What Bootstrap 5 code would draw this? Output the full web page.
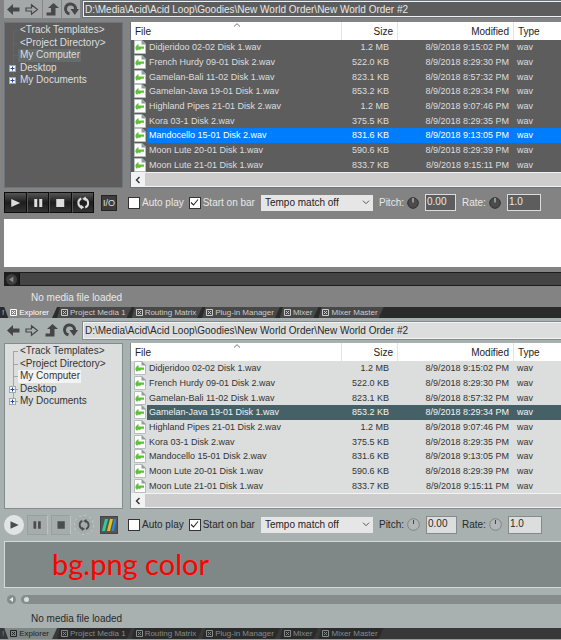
<!DOCTYPE html>
<html lang="en">
<head>
<meta charset="utf-8">
<meta name="viewport" content="width=device-width, initial-scale=1">
<title>Explorer</title>
<link rel="stylesheet" href="https://cdn.jsdelivr.net/npm/bootstrap@5.3.0/dist/css/bootstrap.min.css">
<style>
body{font-family:"Liberation Sans",Arial,sans-serif;font-size:10px;line-height:12px;background:#838383;overflow-x:hidden}
button,input,select{font:inherit;padding:0;margin:0;border-radius:0;color:inherit}
svg{display:block;flex:none}
.pane{background:var(--bg);color:var(--ink)}
.dark-pane{--bg:#838383;--ink:#e8e8e8;--well:#5d5d5d;--wellink:#dedede;--edge:#69747c;--sel:#007dfc;--selink:#fff;--hot:#666b6c;--line:#656565;--boxedge:#dcdcdc;--arrow:#484848}
.light-pane{--bg:#a9b0b0;--ink:#262a2a;--well:#dcdedd;--wellink:#333;--edge:#818b90;--sel:#456067;--selink:#f2f4f4;--hot:#f3f3f3;--line:#a0a5a5;--boxedge:#858b8b;--arrow:#454545}
.topbar{height:22px;padding:1px 0 5px 4px}
.light-pane .topbar{height:25px;padding-top:4px}
.toolbtn{width:19px;height:19px;border:0;background:none;color:var(--arrow)}
.dark-pane .toolbtn{background:#a5a8a8;height:18px}
.dark-pane .toolbtn+.toolbtn{border-left:1px solid #858585}
.dark-pane .toolbtn:nth-child(2){border-left:0}
.pathbox{height:16px;margin-left:3px;border:1px solid #f2f2f2;border-right:0;outline:1px solid var(--edge);background:var(--well);color:var(--ink);padding:0 1px;min-width:0}
.light-pane .pathbox{height:17px}
.browser{gap:7px;padding-left:4px;height:166px}
.tree{width:119px;flex:none;background:var(--well);border:1px solid var(--edge);color:var(--wellink);padding-top:1px}
.tree ul{height:63px}
.tree li{padding-left:15px;position:relative}
.tree li::before{content:"";position:absolute;left:8px;top:0;bottom:0;border-left:1px solid var(--line)}
.tree li:first-child::before{top:6px}
.tree li:last-child::before{bottom:6px}
.tree li::after{content:"";position:absolute;left:8px;top:6px;width:5px;border-top:1px solid var(--line)}
.tree a{color:inherit;display:block;line-height:12px}
.tree .picked a{background:var(--hot);margin-left:-2px;padding:0 1px 0 2px;z-index:1}
.expander{position:absolute;left:4px;top:3px;z-index:1}
.files{background:var(--well);color:var(--wellink);border:1px solid var(--edge);border-width:0 0 1px 1px;min-width:0;overflow:hidden}
.files table{table-layout:fixed;width:100%;height:150px;border-collapse:separate;border-spacing:0;white-space:nowrap}
.files th{background:#fff;color:#222;font-weight:400;height:18px;padding:1px 4px 0;position:relative}
.files th+th{border-left:1px solid #e4e4e4}
.files td{padding:0 0 0 2px;line-height:12px;font-size:9px}
.files td.icon-cell{padding:0 0 0 3px}
.files td:nth-child(3){padding-right:8px;text-align:right}
.files td:nth-child(4){padding-right:4px;text-align:right}
.files td:nth-child(5){padding-left:4px}
.files .chosen td:not(.icon-cell){background:var(--sel);color:var(--selink)}
.sorter{position:absolute;left:102px;top:1px}
.hscroll{height:15px;background:#cdcdcd;border-top:1px solid #f3f3f3;border-bottom:1px solid #f3f3f3}
.hscroll button{width:14px;height:13px;border:0;background:#f2f2f2;color:#333;padding-left:4px}
.controls{height:31px;padding-left:4px;padding-bottom:2px;white-space:nowrap}
.light-pane .controls{height:32px;padding-bottom:1px}
.transport{width:90px;flex:none}
.transport button{height:21px;flex:1 1 0;min-width:0;border:1px solid #0c0c0c;background:linear-gradient(#555,#1d1d1d 50%,#333);color:#ddd}
.transport svg{width:100%}
.transport button+button{border-left-color:#555}
.light-pane .transport{gap:3px}
.light-pane .transport button{height:20px;background:#a6acac;border:1px solid #979f9f;border-right-color:#bdc3c3;color:#4a4d4d}
.light-pane .transport button:first-child{background:#e1e4e4;border-color:#e1e4e4;border-radius:50%}
.light-pane .transport button:last-child{border:1px dashed #c2c8c8;border-radius:50%}
.iobtn{width:16px;height:16px;flex:none;margin:0 11px 0 7px;border:1px solid #222;background:#3c3c3c;color:#e0e0e0;font-size:9px;line-height:12px}
.light-pane .iobtn{width:18px;height:18px;margin:0 10px 0 6px;background:#555;border-color:#444}
.tick{appearance:none;width:12px;height:12px;border:1px solid #333;background:#fff;flex:none}
.tick:checked{background:#fff url("data:image/svg+xml,%3Csvg xmlns='http://www.w3.org/2000/svg' viewBox='0 0 9 9'%3E%3Cpath d='M1 4.5L3.5 7L8 1.5' fill='none' stroke='%23222' stroke-width='1.1'/%3E%3C/svg%3E") center/9px 9px no-repeat}
.choice{gap:2px}
.choice+.choice{margin-left:5px}
.tempo{width:112px;height:16px;margin:0 6px;border:0;color:#222;appearance:none;padding-left:4px;background:#e6e6e6 url("data:image/svg+xml,%3Csvg xmlns='http://www.w3.org/2000/svg' viewBox='0 0 8 5'%3E%3Cpath d='M1 .7L4 3.7L7 .7' fill='none' stroke='%23555'/%3E%3C/svg%3E") right 3px center/8px 5px no-repeat}
.knoblabel{margin-right:3px}
.num{width:31px;height:17px;margin:0 6px;border:1px solid var(--boxedge);background:var(--well);color:var(--ink);padding:0 0 2px 1px}
.num.rate{width:34px}
.light-pane .num{height:18px;margin:0 5px 0 6px}
.wave{height:48px;margin-left:4px;background:#fff}
.light-pane .wave{height:47px;background:#7f8886;border:1px solid #d4dada;border-right:0;color:#f00;font:29px/44px Lato,sans-serif;padding-left:47px}
.seek{height:14px;margin:5px 0 0 4px;background:#1d1d1d}
.seek button,.seek2 button{border:0;background:none}
.seek button{width:15px}
.seek span{flex:1;margin:1px 0;background:#444;border-left:1px solid #111}
.seek2{height:9px;margin:7px 0 0 7px;gap:5px}
.seek2 span{flex:1;height:9px;background:#858c8b;border-radius:5px 0 0 5px;padding:2px 3px}
.seek2 i{display:block;width:5px;height:5px;border-radius:50%;background:#d9dddd}
.status{height:21px;padding:6px 0 0 31px}
.light-pane .status{height:24px;padding-top:9px}
.tabstrip{height:11px;background:#2b2b2b;font-size:8px;line-height:11px;color:#ccc;padding-left:2px;overflow:hidden}
.tabstrip a{color:inherit;height:11px;padding:0 6px 0 4px;gap:2px;background:#484848;clip-path:polygon(3px 0,100% 0,calc(100% - 5px) 100%,0 100%);white-space:nowrap}
.tabstrip a.current{background:#838383;color:#fff;padding:0 8px 0 6px;clip-path:polygon(0 0,100% 0,calc(100% - 5px) 100%,4px 100%)}
.lower{background:#383838;color:#858c8c;border-bottom:1px solid #999;height:12px}
.lower a{background:#2b2b2b}
.lower a.current{background:#7f8886;color:#222}
</style>
<script src="https://cdn.jsdelivr.net/npm/bootstrap@5.3.0/dist/js/bootstrap.bundle.min.js"></script>
</head>
<body>
<svg width="0" height="0" class="position-absolute" aria-hidden="true">
<symbol id="back" viewBox="0 0 19 18"><path d="M3 9.5L9 4V7.5H15.5V11.5H9V15Z" fill="currentColor"/></symbol>
<symbol id="fwd" viewBox="0 0 19 18"><path d="M3 8H8.5V4.8L14.5 9.5L8.5 14.2V11H3Z" fill="none" stroke="currentColor" stroke-width="1.2"/></symbol>
<symbol id="up" viewBox="0 0 19 18"><path d="M3.500 12.5H8V8H5L10.5 3L16 8H12.5V15.5H3.500Z" fill="currentColor"/></symbol>
<symbol id="reload" viewBox="0 0 19 18"><path d="M7.5 13.8A5 5 0 1 1 13.5 9" fill="none" stroke="currentColor" stroke-width="3"/><path d="M8.5 9H17L12.8 15Z" fill="currentColor"/></symbol>
<symbol id="wav" viewBox="0 0 12 14"><path d="M.5 .5H8L11.5 4V13.5H.5Z" fill="#fff" stroke="#b5bcbc"/><path d="M7.5 0L12 4.5H7.5Z" fill="#8d9c9c"/><path d="M1.5 7L3 5L4.500 4V6.500H10V8.8H7L6 10L4 9.500L3 11L1.5 9Z" fill="#5cc232"/></symbol>
<symbol id="plus" viewBox="0 0 7 7"><rect x=".5" y=".5" width="6" height="6" fill="#f6f8fa" stroke="#9aa"/><path d="M1.5 3.5H5.5M3.5 1.5V5.5" stroke="#2a48a0"/></symbol>
<symbol id="xbox" viewBox="0 0 7 7"><path d="M.5 .5H6.5V6.5H.5ZM2 2L5 5M5 2L2 5" fill="none" stroke="currentColor"/></symbol>
<symbol id="left" viewBox="0 0 6 8"><path d="M4.5 1L1.5 4L4.5 7" fill="none" stroke="currentColor" stroke-width="1.4"/></symbol>
<symbol id="asc" viewBox="0 0 8 4"><path d="M1 3.5L4 .7L7 3.5" fill="none" stroke="#777"/></symbol>
<symbol id="play" viewBox="0 0 20 18"><path d="M6 5L15 9L6 13Z" fill="currentColor"/></symbol>
<symbol id="pause" viewBox="0 0 20 18"><path d="M6 5H9V13H6ZM11 5H14V13H11Z" fill="currentColor"/></symbol>
<symbol id="stop" viewBox="0 0 20 18"><path d="M6 5H14V13H6Z" fill="currentColor"/></symbol>
<symbol id="loop" viewBox="0 0 20 18"><path d="M8 4.5A4.8 4.8 0 0 0 8.5 13.5M12 13.5A4.8 4.8 0 0 0 11.5 4.5" fill="none" stroke="currentColor" stroke-width="2"/><path d="M7.5 15.5L11 13.3L7.5 10.8ZM12.5 2.5L9 4.7L12.5 7.2Z" fill="currentColor"/></symbol>
<symbol id="knobdark" viewBox="0 0 12 12"><circle cx="6" cy="6" r="5.3" fill="#4b4b4b" stroke="#303030"/><path d="M6 1V5.5" stroke="#ddd"/></symbol>
<symbol id="knoblight" viewBox="0 0 13 13"><circle cx="6.5" cy="6.5" r="5.8" fill="#b2b8b8" stroke="#7f8585"/><path d="M6.5 2V6" stroke="#444"/></symbol>
<symbol id="tri" viewBox="0 0 9 9"><circle cx="4.5" cy="4.5" r="4.5" fill="var(--disc)"/><path d="M2.5 4.5L6 2V7Z" fill="var(--tip)"/></symbol>
</svg>

<main>
<section class="pane dark-pane" aria-label="Explorer, dark theme">
  <div class="topbar d-flex align-items-center">
    <button class="toolbtn" aria-label="Back"><svg width="19" height="18"><use href="#back"/></svg></button>
    <button class="toolbtn" aria-label="Forward"><svg width="19" height="18"><use href="#fwd"/></svg></button>
    <button class="toolbtn" aria-label="Up"><svg width="19" height="18"><use href="#up"/></svg></button>
    <button class="toolbtn" aria-label="Refresh"><svg width="19" height="18"><use href="#reload"/></svg></button>
    <input class="pathbox flex-grow-1" aria-label="Path" value="D:\Media\Acid\Acid Loop\Goodies\New World Order\New World Order #2">
  </div>
  <div class="browser d-flex">
    <nav class="tree" aria-label="Folders">
      <ul class="list-unstyled d-flex flex-column m-0">
        <li class="flex-fill"><a class="text-decoration-none" href="#">&lt;Track Templates&gt;</a></li>
        <li class="flex-fill"><a class="text-decoration-none" href="#">&lt;Project Directory&gt;</a></li>
        <li class="flex-fill picked d-flex"><a class="text-decoration-none" href="#">My Computer</a></li>
        <li class="flex-fill"><svg class="expander" width="7" height="7"><use href="#plus"/></svg><a class="text-decoration-none" href="#">Desktop</a></li>
        <li class="flex-fill"><svg class="expander" width="7" height="7"><use href="#plus"/></svg><a class="text-decoration-none" href="#">My Documents</a></li>
      </ul>
    </nav>
    <div class="files flex-grow-1 d-flex flex-column justify-content-between">
      <table>
        <colgroup><col style="width:16px"><col style="width:194px"><col style="width:56px"><col style="width:116px"><col></colgroup>
        <thead><tr><th colspan="2">File<svg class="sorter" width="8" height="4"><use href="#asc"/></svg></th><th class="text-end">Size</th><th class="text-end">Modified</th><th>Type</th></tr></thead>
        <tbody>
          <tr><td class="icon-cell"><svg width="12" height="14"><use href="#wav"/></svg></td><td>Didjeridoo 02-02 Disk 1.wav</td><td>1.2 MB</td><td>8/9/2018 9:15:02 PM</td><td>wav</td></tr>
          <tr><td class="icon-cell"><svg width="12" height="14"><use href="#wav"/></svg></td><td>French Hurdy 09-01 Disk 2.wav</td><td>522.0 KB</td><td>8/9/2018 8:29:30 PM</td><td>wav</td></tr>
          <tr><td class="icon-cell"><svg width="12" height="14"><use href="#wav"/></svg></td><td>Gamelan-Bali 11-02 Disk 1.wav</td><td>823.1 KB</td><td>8/9/2018 8:57:32 PM</td><td>wav</td></tr>
          <tr><td class="icon-cell"><svg width="12" height="14"><use href="#wav"/></svg></td><td>Gamelan-Java 19-01 Disk 1.wav</td><td>853.2 KB</td><td>8/9/2018 8:29:34 PM</td><td>wav</td></tr>
          <tr><td class="icon-cell"><svg width="12" height="14"><use href="#wav"/></svg></td><td>Highland Pipes 21-01 Disk 2.wav</td><td>1.2 MB</td><td>8/9/2018 9:07:46 PM</td><td>wav</td></tr>
          <tr><td class="icon-cell"><svg width="12" height="14"><use href="#wav"/></svg></td><td>Kora 03-1 Disk 2.wav</td><td>375.5 KB</td><td>8/9/2018 8:29:35 PM</td><td>wav</td></tr>
          <tr class="chosen"><td class="icon-cell"><svg width="12" height="14"><use href="#wav"/></svg></td><td>Mandocello 15-01 Disk 2.wav</td><td>831.6 KB</td><td>8/9/2018 9:13:05 PM</td><td>wav</td></tr>
          <tr><td class="icon-cell"><svg width="12" height="14"><use href="#wav"/></svg></td><td>Moon Lute 20-01 Disk 1.wav</td><td>590.6 KB</td><td>8/9/2018 8:29:39 PM</td><td>wav</td></tr>
          <tr><td class="icon-cell"><svg width="12" height="14"><use href="#wav"/></svg></td><td>Moon Lute 21-01 Disk 1.wav</td><td>833.7 KB</td><td>8/9/2018 9:15:11 PM</td><td>wav</td></tr>
        </tbody>
      </table>
      <div class="hscroll"><button aria-label="Scroll left"><svg width="6" height="8"><use href="#left"/></svg></button></div>
    </div>
  </div>
  <div class="controls d-flex align-items-center">
    <div class="transport d-flex">
      <button aria-label="Play"><svg width="20" height="18"><use href="#play"/></svg></button>
      <button aria-label="Pause"><svg width="20" height="18"><use href="#pause"/></svg></button>
      <button aria-label="Stop"><svg width="20" height="18"><use href="#stop"/></svg></button>
      <button aria-label="Loop"><svg width="20" height="18"><use href="#loop"/></svg></button>
    </div>
    <button class="iobtn">I/O</button>
    <div class="options d-flex align-items-center">
      <label class="choice d-flex align-items-center"><input class="tick" type="checkbox">Auto play</label>
      <label class="choice d-flex align-items-center"><input class="tick" type="checkbox" checked>Start on bar</label>
      <select class="tempo" aria-label="Tempo match"><option>Tempo match off</option></select>
      <label class="knoblabel" for="pitch1">Pitch:</label><svg width="12" height="12"><use href="#knobdark"/></svg>
      <input class="num" id="pitch1" value="0.00">
      <label class="knoblabel" for="rate1">Rate:</label><svg width="12" height="12"><use href="#knobdark"/></svg>
      <input class="num rate" id="rate1" value="1.0">
    </div>
  </div>
  <div class="wave"></div>
  <div class="seek d-flex"><button class="d-flex align-items-center justify-content-center" style="--disc:#3e3e3e;--tip:#888" aria-label="Seek back"><svg width="11" height="11"><use href="#tri"/></svg></button><span></span></div>
  <div class="status">No media file loaded</div>
  <nav class="tabstrip d-flex" aria-label="Docked windows">!
    <a class="current d-flex align-items-center text-decoration-none" href="#"><svg width="7" height="7"><use href="#xbox"/></svg>Explorer</a>
    <a class="d-flex align-items-center text-decoration-none" href="#"><svg width="7" height="7"><use href="#xbox"/></svg>Project Media 1</a>
    <a class="d-flex align-items-center text-decoration-none" href="#"><svg width="7" height="7"><use href="#xbox"/></svg>Routing Matrix</a>
    <a class="d-flex align-items-center text-decoration-none" href="#"><svg width="7" height="7"><use href="#xbox"/></svg>Plug-in Manager</a>
    <a class="d-flex align-items-center text-decoration-none" href="#"><svg width="7" height="7"><use href="#xbox"/></svg>Mixer</a>
    <a class="d-flex align-items-center text-decoration-none" href="#"><svg width="7" height="7"><use href="#xbox"/></svg>Mixer Master</a>
  </nav>
</section>

<section class="pane light-pane" aria-label="Explorer, light theme">
  <div class="topbar d-flex align-items-center">
    <button class="toolbtn" aria-label="Back"><svg width="19" height="18"><use href="#back"/></svg></button>
    <button class="toolbtn" aria-label="Forward"><svg width="19" height="18"><use href="#fwd"/></svg></button>
    <button class="toolbtn" aria-label="Up"><svg width="19" height="18"><use href="#up"/></svg></button>
    <button class="toolbtn" aria-label="Refresh"><svg width="19" height="18"><use href="#reload"/></svg></button>
    <input class="pathbox flex-grow-1" aria-label="Path" value="D:\Media\Acid\Acid Loop\Goodies\New World Order\New World Order #2">
  </div>
  <div class="browser d-flex">
    <nav class="tree" aria-label="Folders">
      <ul class="list-unstyled d-flex flex-column m-0">
        <li class="flex-fill"><a class="text-decoration-none" href="#">&lt;Track Templates&gt;</a></li>
        <li class="flex-fill"><a class="text-decoration-none" href="#">&lt;Project Directory&gt;</a></li>
        <li class="flex-fill picked d-flex"><a class="text-decoration-none" href="#">My Computer</a></li>
        <li class="flex-fill"><svg class="expander" width="7" height="7"><use href="#plus"/></svg><a class="text-decoration-none" href="#">Desktop</a></li>
        <li class="flex-fill"><svg class="expander" width="7" height="7"><use href="#plus"/></svg><a class="text-decoration-none" href="#">My Documents</a></li>
      </ul>
    </nav>
    <div class="files flex-grow-1 d-flex flex-column justify-content-between">
      <table>
        <colgroup><col style="width:16px"><col style="width:194px"><col style="width:56px"><col style="width:116px"><col></colgroup>
        <thead><tr><th colspan="2">File<svg class="sorter" width="8" height="4"><use href="#asc"/></svg></th><th class="text-end">Size</th><th class="text-end">Modified</th><th>Type</th></tr></thead>
        <tbody>
          <tr><td class="icon-cell"><svg width="12" height="14"><use href="#wav"/></svg></td><td>Didjeridoo 02-02 Disk 1.wav</td><td>1.2 MB</td><td>8/9/2018 9:15:02 PM</td><td>wav</td></tr>
          <tr><td class="icon-cell"><svg width="12" height="14"><use href="#wav"/></svg></td><td>French Hurdy 09-01 Disk 2.wav</td><td>522.0 KB</td><td>8/9/2018 8:29:30 PM</td><td>wav</td></tr>
          <tr><td class="icon-cell"><svg width="12" height="14"><use href="#wav"/></svg></td><td>Gamelan-Bali 11-02 Disk 1.wav</td><td>823.1 KB</td><td>8/9/2018 8:57:32 PM</td><td>wav</td></tr>
          <tr class="chosen"><td class="icon-cell"><svg width="12" height="14"><use href="#wav"/></svg></td><td>Gamelan-Java 19-01 Disk 1.wav</td><td>853.2 KB</td><td>8/9/2018 8:29:34 PM</td><td>wav</td></tr>
          <tr><td class="icon-cell"><svg width="12" height="14"><use href="#wav"/></svg></td><td>Highland Pipes 21-01 Disk 2.wav</td><td>1.2 MB</td><td>8/9/2018 9:07:46 PM</td><td>wav</td></tr>
          <tr><td class="icon-cell"><svg width="12" height="14"><use href="#wav"/></svg></td><td>Kora 03-1 Disk 2.wav</td><td>375.5 KB</td><td>8/9/2018 8:29:35 PM</td><td>wav</td></tr>
          <tr><td class="icon-cell"><svg width="12" height="14"><use href="#wav"/></svg></td><td>Mandocello 15-01 Disk 2.wav</td><td>831.6 KB</td><td>8/9/2018 9:13:05 PM</td><td>wav</td></tr>
          <tr><td class="icon-cell"><svg width="12" height="14"><use href="#wav"/></svg></td><td>Moon Lute 20-01 Disk 1.wav</td><td>590.6 KB</td><td>8/9/2018 8:29:39 PM</td><td>wav</td></tr>
          <tr><td class="icon-cell"><svg width="12" height="14"><use href="#wav"/></svg></td><td>Moon Lute 21-01 Disk 1.wav</td><td>833.7 KB</td><td>8/9/2018 9:15:11 PM</td><td>wav</td></tr>
        </tbody>
      </table>
      <div class="hscroll"><button aria-label="Scroll left"><svg width="6" height="8"><use href="#left"/></svg></button></div>
    </div>
  </div>
  <div class="controls d-flex align-items-center">
    <div class="transport d-flex">
      <button aria-label="Play"><svg width="20" height="18"><use href="#play"/></svg></button>
      <button aria-label="Pause"><svg width="20" height="18"><use href="#pause"/></svg></button>
      <button aria-label="Stop"><svg width="20" height="18"><use href="#stop"/></svg></button>
      <button aria-label="Loop"><svg width="20" height="18"><use href="#loop"/></svg></button>
    </div>
    <button class="iobtn" aria-label="Input/output"><svg width="16" height="16" viewBox="0 0 16 16"><path d="M4 2H7L4 14H1Z" fill="#35c9a0"/><path d="M9 2H12L9 14H6Z" fill="#e3c21c"/><path d="M13 2H15V5L13 14H10.500Z" fill="#2e86d6"/></svg></button>
    <div class="options d-flex align-items-center">
      <label class="choice d-flex align-items-center"><input class="tick" type="checkbox">Auto play</label>
      <label class="choice d-flex align-items-center"><input class="tick" type="checkbox" checked>Start on bar</label>
      <select class="tempo" aria-label="Tempo match"><option>Tempo match off</option></select>
      <label class="knoblabel" for="pitch2">Pitch:</label><svg width="13" height="13"><use href="#knoblight"/></svg>
      <input class="num" id="pitch2" value="0.00">
      <label class="knoblabel" for="rate2">Rate:</label><svg width="13" height="13"><use href="#knoblight"/></svg>
      <input class="num rate" id="rate2" value="1.0">
    </div>
  </div>
  <div class="wave">bg.png color</div>
  <div class="seek2 d-flex"><button class="p-0" style="--disc:#858c8b;--tip:#e6eaea" aria-label="Seek back"><svg width="9" height="9"><use href="#tri"/></svg></button><span><i></i></span></div>
  <div class="status">No media file loaded</div>
  <nav class="tabstrip lower d-flex" aria-label="Docked windows">!
    <a class="current d-flex align-items-center text-decoration-none" href="#"><svg width="7" height="7"><use href="#xbox"/></svg>Explorer</a>
    <a class="d-flex align-items-center text-decoration-none" href="#"><svg width="7" height="7"><use href="#xbox"/></svg>Project Media 1</a>
    <a class="d-flex align-items-center text-decoration-none" href="#"><svg width="7" height="7"><use href="#xbox"/></svg>Routing Matrix</a>
    <a class="d-flex align-items-center text-decoration-none" href="#"><svg width="7" height="7"><use href="#xbox"/></svg>Plug-in Manager</a>
    <a class="d-flex align-items-center text-decoration-none" href="#"><svg width="7" height="7"><use href="#xbox"/></svg>Mixer</a>
    <a class="d-flex align-items-center text-decoration-none" href="#"><svg width="7" height="7"><use href="#xbox"/></svg>Mixer Master</a>
  </nav>
</section>
</main>
</body>
</html>
